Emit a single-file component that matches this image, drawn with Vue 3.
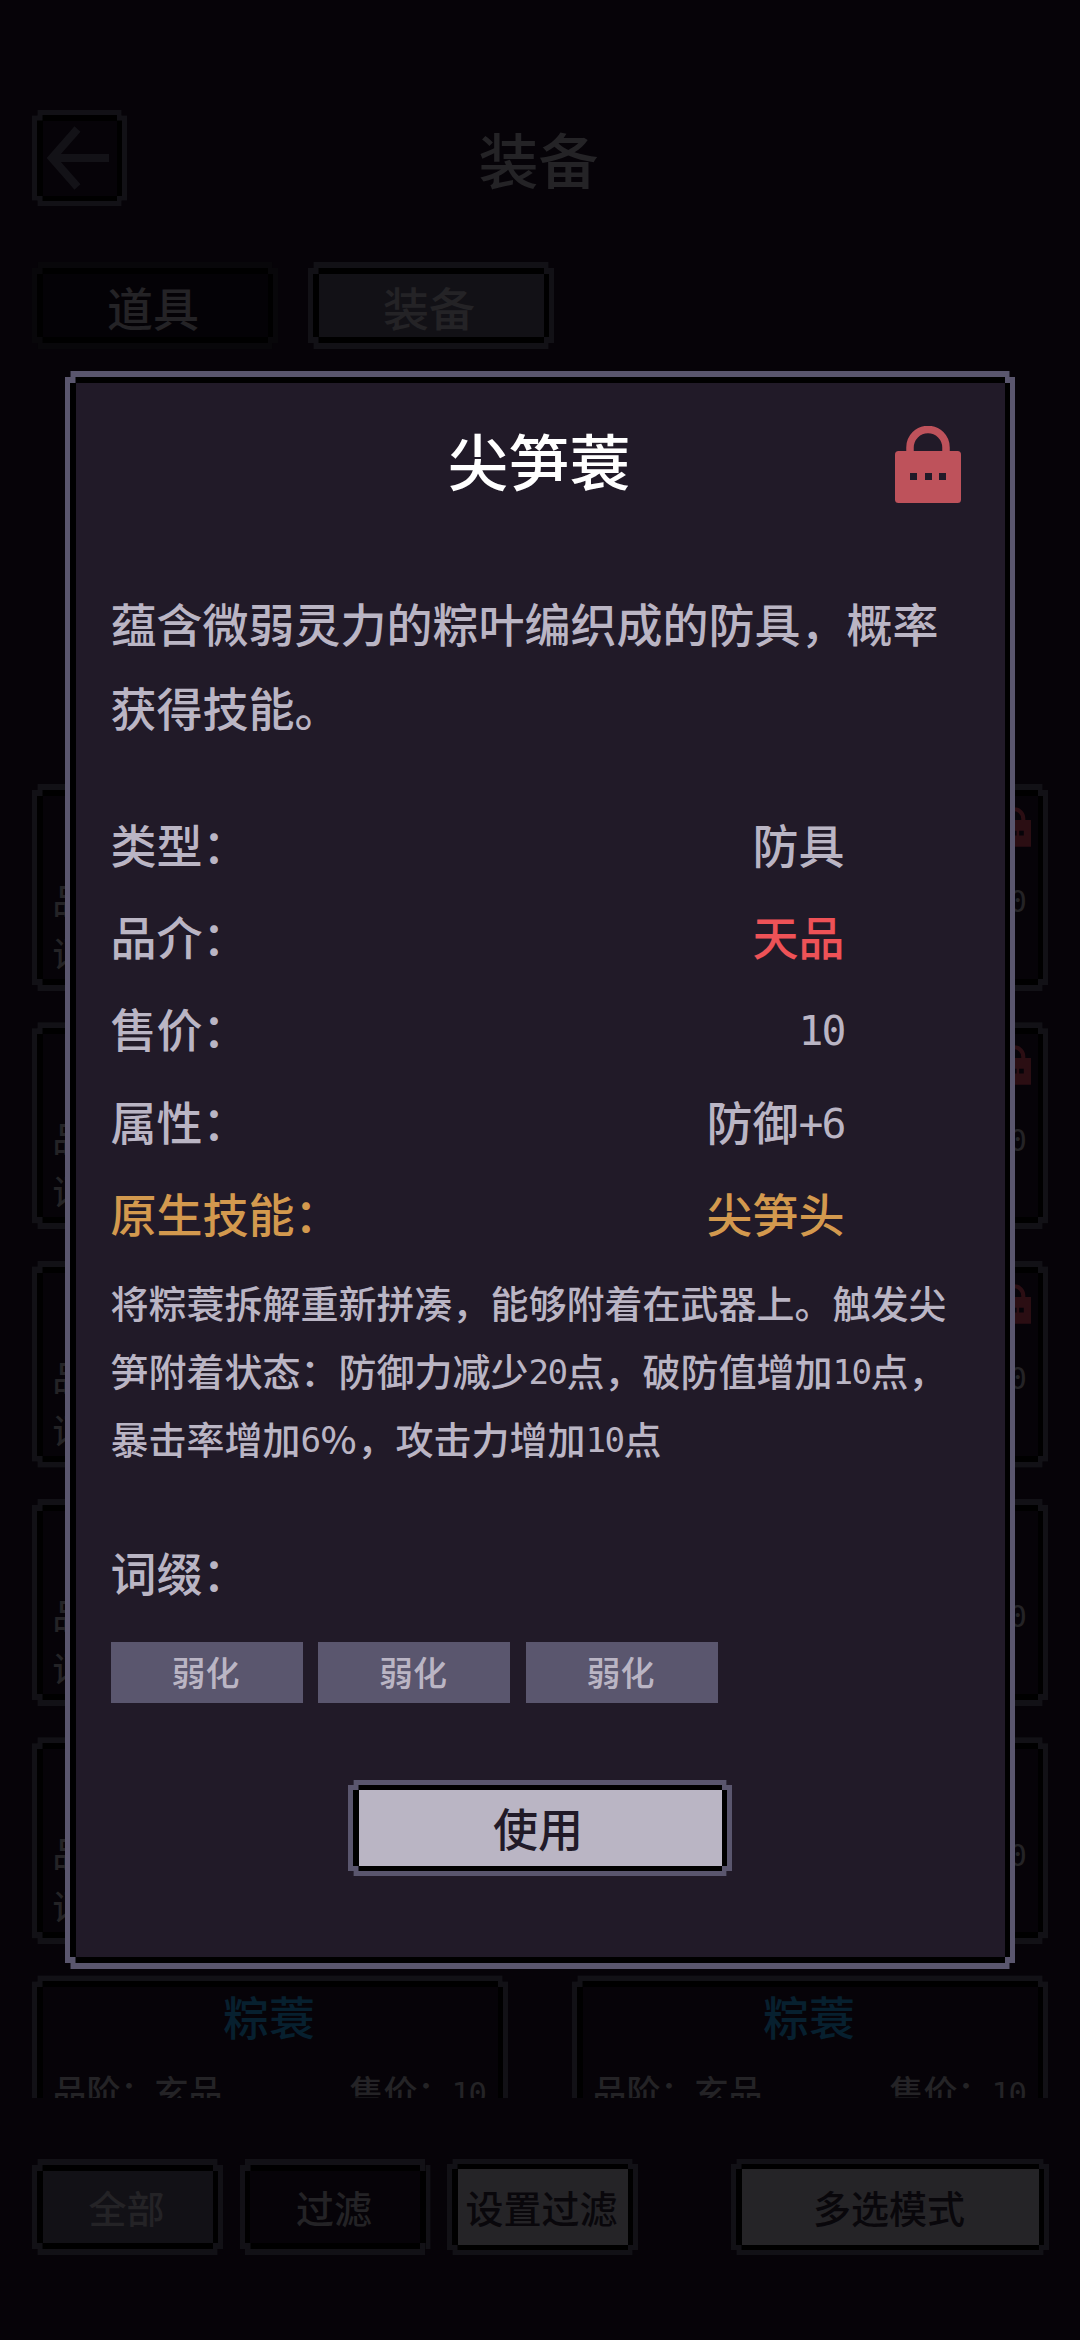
<script setup>
import { h } from 'vue'

// Digits and plus signs take half a character cell each.
const PixelText = (props) =>
  props.text
    .split(/([0-9+%]+)/)
    .filter(Boolean)
    .flatMap((part) => {
      if (!/^[0-9+%]/.test(part)) return part
      if (!part.endsWith('%')) return h('span', { class: 'half' }, part)
      return [h('span', { class: 'half' }, part.slice(0, -1)), h('span', { class: 'percent' }, '%')]
    })
PixelText.props = ['text']

// The dialog leaves only the outer edges of the upper rows uncovered.
const coveredRow = (i) => [
  { id: `l${i}`, grade: '品阶', affix: '词缀' },
  { id: `r${i}`, price: '10', locked: i < 3 },
]
const lastRow = ['l', 'r'].map((side) => ({
  id: side,
  name: '粽蓑',
  grade: '品阶：玄品',
  price: '售价：10',
}))
const cards = [...[0, 1, 2, 3, 4].flatMap(coveredRow), ...lastRow]

const rows = [
  { label: '类型：', value: '防具' },
  { label: '品介：', value: '天品', tone: 'red' },
  { label: '售价：', value: '10' },
  { label: '属性：', value: '防御+6' },
  { label: '原生技能：', value: '尖笋头', tone: 'gold' },
]

const skillLines = [
  '将粽蓑拆解重新拼凑，能够附着在武器上。触发尖',
  '笋附着状态：防御力减少20点，破防值增加10点，',
  '暴击率增加6%，攻击力增加10点',
]

const affixes = ['弱化', '弱化', '弱化']
</script>

<template>
  <div class="screen">
    <header class="top">
      <button class="frame back">
        <svg viewBox="0 0 64 64" width="64" height="64">
          <path d="M31.5 3 L6 32 L31.5 61 M6 32 H63" fill="none" stroke="#131217" stroke-width="8" />
        </svg>
      </button>
      <h1>装备</h1>
    </header>

    <nav class="tabs">
      <button class="frame tab faint">道具</button>
      <button class="frame tab active">装备</button>
    </nav>

    <main class="list">
      <article v-for="card in cards" :key="card.id" class="frame card">
        <div class="card-body">
          <div class="card-name">{{ card.name }}</div>
          <svg v-if="card.locked" class="card-lock" viewBox="0 0 66 77">
            <path d="M15 26V22a18 18 0 0 1 36 0V26" fill="none" stroke="#2b0e13" stroke-width="8" />
            <path d="M0 25H66V77H0Z M14 46V55H23V46Z M29 46V55H38V46Z M43 46V55H52V46Z" fill="#2b0e13" fill-rule="evenodd" />
          </svg>
          <div class="card-line">
            <span v-if="card.grade">{{ card.grade }}</span>
            <span v-if="card.price" class="price"><PixelText :text="card.price" /></span>
          </div>
          <div v-if="card.affix" class="card-line">{{ card.affix }}</div>
        </div>
      </article>
    </main>

    <footer class="bottom">
      <button class="frame chip active">全部</button>
      <button class="frame chip">过滤</button>
      <button class="frame chip light">设置过滤</button>
      <button class="frame chip light wide">多选模式</button>
    </footer>

    <section class="frame modal">
      <div class="modal-body">
        <div class="modal-head">
          <h2>尖笋蓑</h2>
          <svg class="lock" viewBox="0 0 66 77" width="66" height="77">
            <path d="M15 26V21.5a18 18 0 0 1 36 0V26" fill="none" stroke="#be525b" stroke-width="7.5" />
            <rect y="25" width="66" height="52" rx="3.5" fill="#be525b" />
            <path d="M15 47h7v7h-7z M30 47h7v7h-7z M44 47h7v7h-7z" fill="#211a28" />
          </svg>
        </div>

        <p class="desc">蕴含微弱灵力的粽叶编织成的防具，概率<br />获得技能。</p>

        <dl class="rows">
          <div v-for="row in rows" :key="row.label" class="row" :class="row.tone">
            <dt>{{ row.label }}</dt>
            <dd><PixelText :text="row.value" /></dd>
          </div>
        </dl>

        <p class="skill">
          <span v-for="line in skillLines" :key="line" class="skill-line"><PixelText :text="line" /></span>
        </p>

        <div class="affix-title">词缀：</div>
        <div class="affixes">
          <span v-for="(affix, i) in affixes" :key="i">{{ affix }}</span>
        </div>

        <button class="frame use">使用</button>
      </div>
    </section>
  </div>
</template>

<style>
html,
body {
  background: #060308;
}

.half {
  font-family: 'DejaVu Sans Mono', monospace;
  font-size: 0.9em;
  letter-spacing: -0.0465em;
  line-height: 1;
  position: relative;
  top: -0.05em;
}

.percent {
  display: inline-block;
  width: 1em;
  line-height: 1;
  text-align: center;
}
</style>

<style scoped>
* {
  box-sizing: border-box;
}

.screen {
  position: relative;
  display: flex;
  flex-direction: column;
  width: 1080px;
  height: 2340px;
  padding: 110px 32px 0;
  overflow: hidden;
  background: #060308;
  color: #242326;
  font-family: 'Noto Sans CJK SC', sans-serif;
  font-weight: 500;
}

h1,
h2,
p,
dl,
dd {
  margin: 0;
  font-weight: inherit;
}

button {
  font: inherit;
  color: inherit;
  white-space: nowrap;
}

/* Two-step pixel border with notched outer corners. */
.frame {
  --line: #121116;
  --fill: #060308;
  --bx: 5.5px;
  --by: 6px;
  display: block;
  padding: var(--by) var(--bx);
  border: solid var(--line);
  border-width: var(--by) var(--bx);
  background:
    linear-gradient(var(--line), var(--line)) 0 0 / var(--bx) var(--by) no-repeat padding-box,
    linear-gradient(var(--line), var(--line)) 100% 0 / var(--bx) var(--by) no-repeat padding-box,
    linear-gradient(var(--line), var(--line)) 0 100% / var(--bx) var(--by) no-repeat padding-box,
    linear-gradient(var(--line), var(--line)) 100% 100% / var(--bx) var(--by) no-repeat padding-box,
    linear-gradient(var(--fill), var(--fill)) content-box,
    #000;
  clip-path: polygon(
    var(--bx) 0, calc(100% - var(--bx)) 0, calc(100% - var(--bx)) var(--by), 100% var(--by),
    100% calc(100% - var(--by)), calc(100% - var(--bx)) calc(100% - var(--by)), calc(100% - var(--bx)) 100%,
    var(--bx) 100%, var(--bx) calc(100% - var(--by)), 0 calc(100% - var(--by)), 0 var(--by), var(--bx) var(--by)
  );
}

.top {
  display: grid;
  grid-template-columns: 95px 1fr 95px;
  align-items: center;
  height: 96px;
}

.back {
  --by: 5.5px;
  display: flex;
  align-items: center;
  justify-content: center;
  width: 95px;
  height: 96px;
}

.back svg {
  flex: none;
  margin-right: 3px;
}

.top h1 {
  padding: 0 3px 1px 0;
  font-size: 60px;
  line-height: 90px;
  text-align: center;
}

.tabs {
  display: flex;
  gap: 30px;
  margin-top: 56px;
}

.tab {
  width: 246px;
  height: 87px;
  font-size: 46px;
  line-height: 56px;
  text-indent: -4px;
}

.faint {
  --line: #08070a;
  --fill: #040206;
}

.active {
  --fill: #121116;
}

.list {
  display: grid;
  grid-template-columns: 476px 476px;
  justify-content: space-between;
  align-content: start;
  gap: 31.3px 0;
  height: 1314px;
  margin-top: 435px;
  overflow: hidden;
}

.card {
  height: 207px;
}

.card-body {
  position: relative;
  padding: 3px 12px 0 10px;
}

.card-name {
  height: 74px;
  color: #07202f;
  font-size: 46px;
  line-height: 50px;
  text-align: center;
}

.card-lock {
  position: absolute;
  top: 11px;
  right: 7px;
  width: 34px;
  height: 40px;
}

.card-line {
  display: flex;
  font-size: 34px;
  line-height: 53px;
}

.price {
  margin-left: auto;
}

.bottom {
  display: flex;
  gap: 16.5px;
  margin-top: 61px;
}

.chip {
  flex: none;
  width: 191px;
  height: 96px;
  font-size: 38px;
  line-height: 60px;
  text-indent: -2px;
}

.light {
  --fill: #252427;
  --by: 5px;
  color: #09070b;
}

.wide {
  width: 318px;
  margin: 0 -1px 0 auto;
}

.modal {
  --line: #5a566e;
  --fill: #211a28;
  position: absolute;
  left: 65px;
  top: 371px;
  width: 950px;
  height: 1598px;
  color: #bab5c4;
}

.modal-body {
  display: flex;
  flex-direction: column;
  padding: 0 35px;
}

.modal-head {
  display: grid;
  grid-template-columns: 66px 1fr 66px;
  height: 198px;
  padding: 32px 9px 0 0;
}

.modal-head h2 {
  grid-column: 2;
  padding-left: 7px;
  color: #fff;
  font-size: 61px;
  line-height: 90px;
  text-align: center;
}

.lock {
  margin-top: 11px;
}

.desc {
  height: 220px;
  font-size: 46px;
  line-height: 83.5px;
  white-space: nowrap;
}

.row {
  display: flex;
  justify-content: space-between;
  width: 734px;
  height: 92.2px;
  font-size: 46px;
  line-height: 84px;
}

.red dd {
  color: #ee5257;
}

.gold {
  color: #d3994e;
}

.skill {
  display: flex;
  flex-direction: column;
  margin-top: 6px;
  font-size: 38px;
  white-space: nowrap;
}

.skill-line {
  display: block;
  height: 68px;
  line-height: 68px;
}

.affix-title {
  margin-top: 69px;
  font-size: 46px;
  line-height: 60px;
}

.affixes {
  display: flex;
  gap: 15.5px;
  margin-top: 41px;
}

.affixes span {
  width: 192px;
  height: 61px;
  background: #5a566e;
  font-size: 34px;
  line-height: 59px;
  text-align: center;
  text-indent: -2px;
}

.use {
  --line: #5a566e;
  --fill: #bab5c4;
  --by: 5px;
  align-self: center;
  width: 384px;
  height: 96px;
  margin-top: 77px;
  color: #211a28;
  font-size: 45px;
  line-height: 74px;
  text-indent: -4px;
}
</style>
